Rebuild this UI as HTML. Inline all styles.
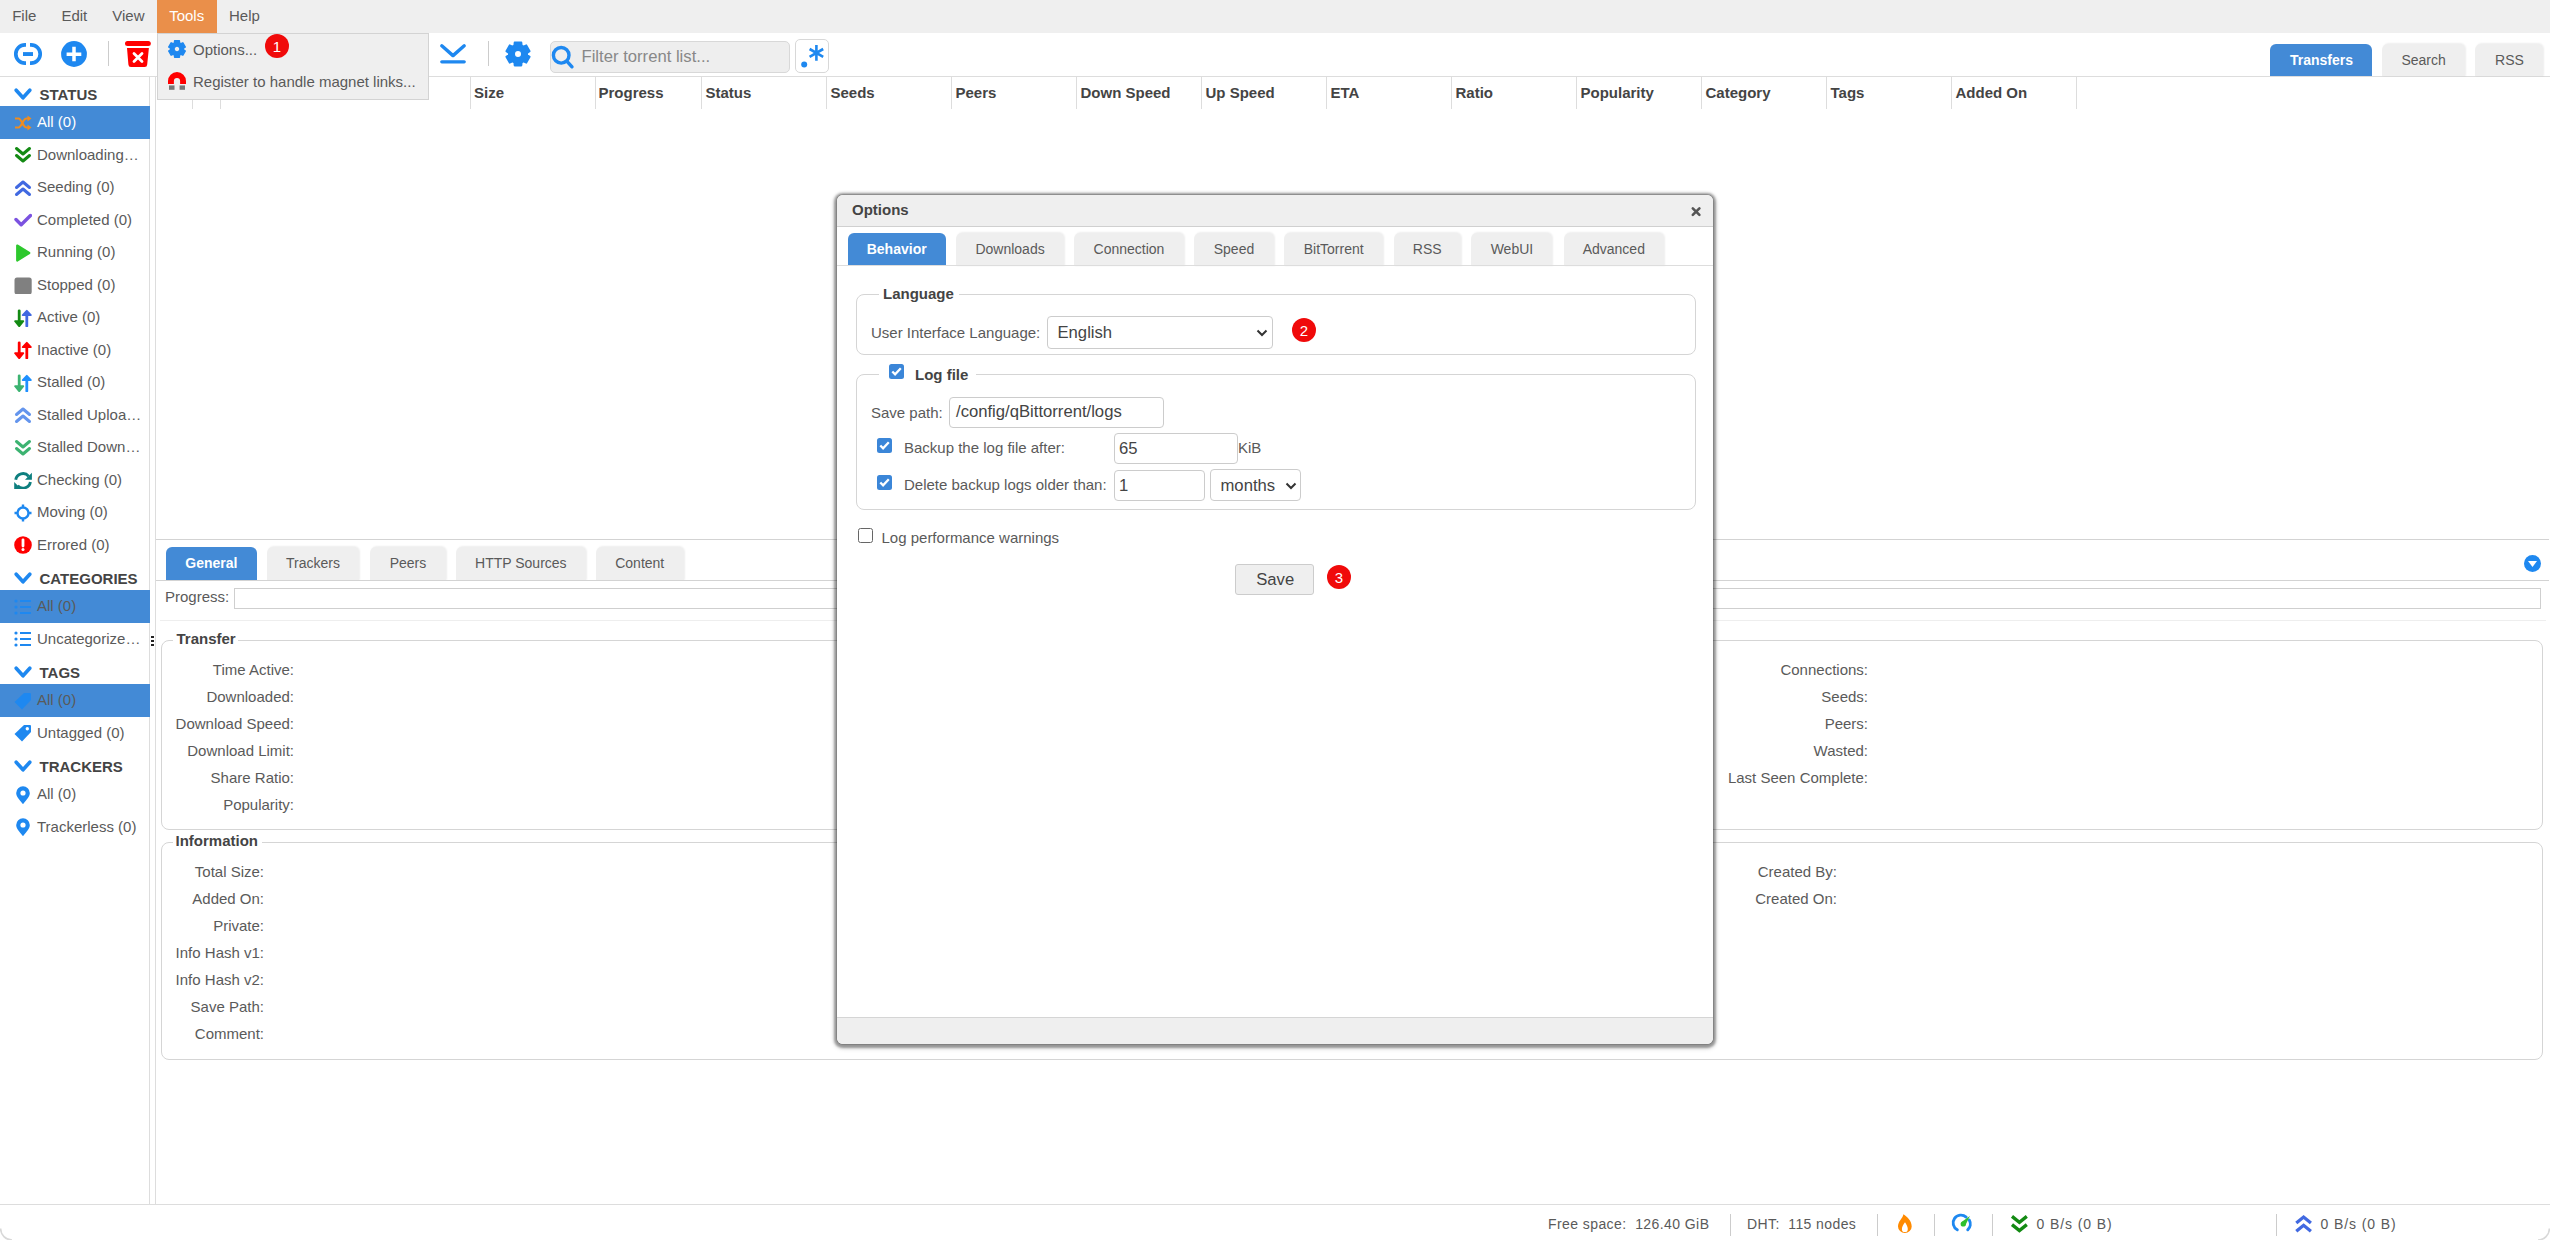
<!DOCTYPE html>
<html><head><meta charset="utf-8"><title>qBittorrent WebUI</title>
<style>
html,body{margin:0;padding:0;width:2550px;height:1240px;overflow:hidden;background:#fff;font-family:"Liberation Sans", sans-serif;}
.t{position:absolute;white-space:pre;line-height:1;}
.r{position:absolute;box-sizing:border-box;}
</style></head><body>
<div class="r" style="left:0.00px;top:0.00px;width:2550.00px;height:32.50px;background:#efefef"></div>
<div class="r" style="left:157.00px;top:0.00px;width:60.00px;height:32.50px;background:#ea8f4a"></div>
<div class="t" style="left:12.20px;top:8.30px;font-size:15px;color:#5a5a5a;">File</div>
<div class="t" style="left:61.40px;top:8.30px;font-size:15px;color:#5a5a5a;">Edit</div>
<div class="t" style="left:112.30px;top:8.30px;font-size:15px;color:#5a5a5a;">View</div>
<div class="t" style="left:169.20px;top:8.30px;font-size:15px;color:#fff;">Tools</div>
<div class="t" style="left:229.00px;top:8.30px;font-size:15px;color:#5a5a5a;">Help</div>
<div class="r" style="left:0.00px;top:76.00px;width:2550.00px;height:1.00px;background:#ddd"></div>
<svg class="r" style="left:10px;top:38px" width="36" height="30" viewBox="10 38 36 30"><path d="M26 44.8H25A9.2 9.2 0 0 0 25 63.2H26M30 44.8H31A9.2 9.2 0 0 1 31 63.2H30" fill="none" stroke="#1e88f0" stroke-width="3.7"/><rect x="23" y="52.1" width="10" height="3.9" fill="#1e88f0"/></svg>
<svg class="r" style="left:58px;top:38px" width="32" height="32" viewBox="58 38 32 32"><circle cx="74" cy="54" r="12.9" fill="#1e88f0"/><path d="M74 46.7V61.2M66.6 54.2H81.3" stroke="#fff" stroke-width="3.5"/></svg>
<div class="r" style="left:107.50px;top:41.00px;width:1.00px;height:24.50px;background:#ccc"></div>
<svg class="r" style="left:120px;top:38px" width="34" height="32" viewBox="120 38 34 32"><path d="M127.5 40.9H148.3A2.5 2.5 0 0 1 148.3 45.9H127.5A2.5 2.5 0 0 1 127.5 40.9Z" fill="#f00"/><path d="M127 47.9H148.9L147.2 64.4A2.6 2.6 0 0 1 144.6 66.9H131A2.6 2.6 0 0 1 128.4 64.4Z" fill="#f00"/><path d="M134 53.5L142 61.5M142 53.5L134 61.5" stroke="#fff" stroke-width="2.8" stroke-linecap="round"/></svg>
<svg class="r" style="left:436px;top:40px" width="34" height="28" viewBox="436 40 34 28"><path d="M441.8 45.8L453 55.6L464.2 45.8" fill="none" stroke="#1e88f0" stroke-width="3.4" stroke-linecap="round" stroke-linejoin="round"/><path d="M441.8 61.8H464.2" stroke="#1e88f0" stroke-width="3.3" stroke-linecap="round"/></svg>
<div class="r" style="left:487.50px;top:41.00px;width:1.00px;height:24.50px;background:#ccc"></div>
<svg class="r" style="left:500px;top:36px" width="36" height="36" viewBox="500 36 36 36"><path d="M527.15 54.97 L529.67 56.80 L526.26 62.70 L523.42 61.44 L521.73 62.41 L521.41 65.51 L514.59 65.51 L514.27 62.41 L512.58 61.44 L509.74 62.70 L506.33 56.80 L508.85 54.97 L508.85 53.03 L506.33 51.20 L509.74 45.30 L512.58 46.56 L514.27 45.59 L514.59 42.49 L521.41 42.49 L521.73 45.59 L523.42 46.56 L526.26 45.30 L529.67 51.20 L527.15 53.03Z M521.90 54.00A3.9 3.9 0 1 0 514.10 54.00A3.9 3.9 0 1 0 521.90 54.00Z" fill="#1e88f0" fill-rule="evenodd" stroke="#1e88f0" stroke-width="1.8" stroke-linejoin="round"/></svg>
<div class="r" style="left:549.50px;top:41.00px;width:240.00px;height:31.50px;background:#eee;border:1px solid #d8d8d8;border-radius:5px"></div>
<svg class="r" style="left:548px;top:42px" width="30" height="30" viewBox="548 42 30 30"><circle cx="561.2" cy="55.3" r="7.8" fill="none" stroke="#1e88f0" stroke-width="3.4"/><path d="M567 61.3L572 66.8" stroke="#1e88f0" stroke-width="3.4" stroke-linecap="round"/></svg>
<div class="t" style="left:581.50px;top:49.09px;font-size:16.67px;color:#888;">Filter torrent list...</div>
<div class="r" style="left:795.30px;top:39.30px;width:33.50px;height:33.50px;background:#fff;border:1px solid #d8d8d8;border-radius:5px"></div>
<svg class="r" style="left:796px;top:40px" width="32" height="32" viewBox="796 40 32 32"><circle cx="804.2" cy="64.5" r="3" fill="#1e88f0"/><path d="M816.4 45.1V60.7M809.6 49L823.2 56.8M823.2 49L809.6 56.8" stroke="#1e88f0" stroke-width="2.6"/></svg>
<div class="r" style="left:2270.00px;top:44.00px;width:102.00px;height:32.00px;background:#438ad6;border-radius:6px 6px 0 0"></div>
<div class="t" style="left:1721.50px;width:1200px;text-align:center;top:52.55px;font-size:14px;font-weight:bold;color:#fff;">Transfers</div>
<div class="r" style="left:2382.30px;top:44.00px;width:82.50px;height:32.00px;background:#efefef;border-radius:6px 6px 0 0;box-shadow:1px -0.5px 2px rgba(0,0,0,0.07)"></div>
<div class="t" style="left:1823.60px;width:1200px;text-align:center;top:52.55px;font-size:14px;color:#5a5a5a;">Search</div>
<div class="r" style="left:2475.00px;top:44.00px;width:68.20px;height:32.00px;background:#efefef;border-radius:6px 6px 0 0;box-shadow:1px -0.5px 2px rgba(0,0,0,0.07)"></div>
<div class="t" style="left:1909.50px;width:1200px;text-align:center;top:52.55px;font-size:14px;color:#5a5a5a;">RSS</div>
<div class="r" style="left:149.00px;top:77.00px;width:1.00px;height:1127.00px;background:#ddd"></div>
<div class="r" style="left:155.00px;top:77.00px;width:1.00px;height:1127.00px;background:#ddd"></div>
<svg class="r" style="left:14.00px;top:88.00px" width="18" height="13" viewBox="0 0 18 13"><path d="M2.2 2.2L9 9.8l6.8-7.6" fill="none" stroke="#1e88f0" stroke-width="3.6" stroke-linecap="round" stroke-linejoin="round"/></svg>
<div class="t" style="left:39.50px;top:87.30px;font-size:15px;font-weight:bold;color:#444;">STATUS</div>
<div class="r" style="left:0.00px;top:106.00px;width:149.50px;height:32.50px;background:#438ad6"></div>
<svg class="r" style="left:14px;top:113.50px" width="18" height="18" viewBox="0 0 18 18"><path d="M1 4.5h3.5c3 0 4.5 9 8 9H16M1 13.5h3.5c3 0 4.5-9 8-9H16" fill="none" stroke="#f08c1e" stroke-width="2.2"/><path d="M13.5 1.5l4 3-4 3zM13.5 10.5l4 3-4 3z" fill="#f08c1e"/></svg>
<div class="t" style="left:37.00px;top:114.10px;font-size:15px;color:#fff;">All (0)</div>
<svg class="r" style="left:14px;top:146.00px" width="18" height="18" viewBox="0 0 18 18"><path d="M2.5 2.5L9 8l6.5-5.5M2.5 9.5L9 15l6.5-5.5" fill="none" stroke="#138a13" stroke-width="3" stroke-linecap="round" stroke-linejoin="round"/></svg>
<div class="t" style="left:37.00px;top:146.60px;font-size:15px;color:#5a5a5a;">Downloading…</div>
<svg class="r" style="left:14px;top:178.50px" width="18" height="18" viewBox="0 0 18 18"><path d="M2.5 8.5L9 3l6.5 5.5M2.5 15.5L9 10l6.5 5.5" fill="none" stroke="#4169e1" stroke-width="3" stroke-linecap="round" stroke-linejoin="round"/></svg>
<div class="t" style="left:37.00px;top:179.10px;font-size:15px;color:#5a5a5a;">Seeding (0)</div>
<svg class="r" style="left:14px;top:211.00px" width="18" height="18" viewBox="0 0 18 18"><path d="M2 8.5l5.2 5.2L16.5 4.5" fill="none" stroke="#7b52e0" stroke-width="3.4" stroke-linecap="round" stroke-linejoin="round"/></svg>
<div class="t" style="left:37.00px;top:211.60px;font-size:15px;color:#5a5a5a;">Completed (0)</div>
<svg class="r" style="left:14px;top:243.50px" width="18" height="18" viewBox="0 0 18 18"><path d="M3.2 1.5L15.3 9L3.2 16.5Z" fill="#2dc82d" stroke="#2dc82d" stroke-width="2.2" stroke-linejoin="round"/></svg>
<div class="t" style="left:37.00px;top:244.10px;font-size:15px;color:#5a5a5a;">Running (0)</div>
<svg class="r" style="left:14px;top:276.00px" width="18" height="18" viewBox="0 0 18 18"><rect x="0.5" y="1.4" width="17.2" height="17" rx="2.5" fill="#808080"/></svg>
<div class="t" style="left:37.00px;top:276.60px;font-size:15px;color:#5a5a5a;">Stopped (0)</div>
<svg class="r" style="left:14px;top:308.50px" width="18" height="18" viewBox="0 0 18 18"><path d="M5.2 1.8V12.5" stroke="#138a13" stroke-width="2.8" stroke-linecap="round"/><path d="M1.2 12.2H9.2L5.2 17.1Z" fill="#138a13" stroke="#138a13" stroke-width="2" stroke-linejoin="round"/><path d="M12.8 16.9V6" stroke="#4169e1" stroke-width="2.8" stroke-linecap="round"/><path d="M8.8 6.1H16.8L12.8 1.9Z" fill="#4169e1" stroke="#4169e1" stroke-width="2" stroke-linejoin="round"/></svg>
<div class="t" style="left:37.00px;top:309.10px;font-size:15px;color:#5a5a5a;">Active (0)</div>
<svg class="r" style="left:14px;top:341.00px" width="18" height="18" viewBox="0 0 18 18"><path d="M5.2 1.8V12.5" stroke="#f00" stroke-width="2.8" stroke-linecap="round"/><path d="M1.2 12.2H9.2L5.2 17.1Z" fill="#f00" stroke="#f00" stroke-width="2" stroke-linejoin="round"/><path d="M12.8 16.9V6" stroke="#f00" stroke-width="2.8" stroke-linecap="round"/><path d="M8.8 6.1H16.8L12.8 1.9Z" fill="#f00" stroke="#f00" stroke-width="2" stroke-linejoin="round"/></svg>
<div class="t" style="left:37.00px;top:341.60px;font-size:15px;color:#5a5a5a;">Inactive (0)</div>
<svg class="r" style="left:14px;top:373.50px" width="18" height="18" viewBox="0 0 18 18"><path d="M5.2 1.8V12.5" stroke="#3cb371" stroke-width="2.8" stroke-linecap="round"/><path d="M1.2 12.2H9.2L5.2 17.1Z" fill="#3cb371" stroke="#3cb371" stroke-width="2" stroke-linejoin="round"/><path d="M12.8 16.9V6" stroke="#1e90ff" stroke-width="2.8" stroke-linecap="round"/><path d="M8.8 6.1H16.8L12.8 1.9Z" fill="#1e90ff" stroke="#1e90ff" stroke-width="2" stroke-linejoin="round"/></svg>
<div class="t" style="left:37.00px;top:374.10px;font-size:15px;color:#5a5a5a;">Stalled (0)</div>
<svg class="r" style="left:14px;top:406.00px" width="18" height="18" viewBox="0 0 18 18"><path d="M2.5 8.5L9 3l6.5 5.5M2.5 15.5L9 10l6.5 5.5" fill="none" stroke="#6495ed" stroke-width="3" stroke-linecap="round" stroke-linejoin="round"/></svg>
<div class="t" style="left:37.00px;top:406.60px;font-size:15px;color:#5a5a5a;">Stalled Uploa…</div>
<svg class="r" style="left:14px;top:438.50px" width="18" height="18" viewBox="0 0 18 18"><path d="M2.5 2.5L9 8l6.5-5.5M2.5 9.5L9 15l6.5-5.5" fill="none" stroke="#3cb371" stroke-width="3" stroke-linecap="round" stroke-linejoin="round"/></svg>
<div class="t" style="left:37.00px;top:439.10px;font-size:15px;color:#5a5a5a;">Stalled Down…</div>
<svg class="r" style="left:14px;top:471.00px" width="18" height="18" viewBox="0 0 18 18"><path d="M1.7 8.8A7.4 7.4 0 0 1 14.6 5.2M16.4 11A7.4 7.4 0 0 1 3.6 14.6" fill="none" stroke="#0e7f7f" stroke-width="2.9"/><path d="M17.9 1.8V8.7H11Z M0.2 11.1V18H7.1Z" fill="#0e7f7f"/></svg>
<div class="t" style="left:37.00px;top:471.60px;font-size:15px;color:#5a5a5a;">Checking (0)</div>
<svg class="r" style="left:14px;top:503.50px" width="18" height="18" viewBox="0 0 18 18"><circle cx="9" cy="9" r="5.5" fill="none" stroke="#1e88f0" stroke-width="2.4"/><path d="M9 0.5v3M9 14.5v3M0.5 9h3M14.5 9h3" stroke="#1e88f0" stroke-width="2.4"/></svg>
<div class="t" style="left:37.00px;top:504.10px;font-size:15px;color:#5a5a5a;">Moving (0)</div>
<svg class="r" style="left:14px;top:536.00px" width="18" height="18" viewBox="0 0 18 18"><circle cx="9" cy="9" r="8.8" fill="#f00"/><path d="M9 3.8v6.2" stroke="#fff" stroke-width="2.8" stroke-linecap="round"/><circle cx="9" cy="13.6" r="1.5" fill="#fff"/></svg>
<div class="t" style="left:37.00px;top:536.60px;font-size:15px;color:#5a5a5a;">Errored (0)</div>
<svg class="r" style="left:14.00px;top:572.00px" width="18" height="13" viewBox="0 0 18 13"><path d="M2.2 2.2L9 9.8l6.8-7.6" fill="none" stroke="#1e88f0" stroke-width="3.6" stroke-linecap="round" stroke-linejoin="round"/></svg>
<div class="t" style="left:39.50px;top:571.30px;font-size:15px;font-weight:bold;color:#444;">CATEGORIES</div>
<div class="r" style="left:0.00px;top:590.00px;width:149.50px;height:32.50px;background:#438ad6"></div>
<svg class="r" style="left:14px;top:597.50px" width="18" height="18" viewBox="0 0 18 18"><circle cx="2" cy="3" r="1.6" fill="#1e88f0"/><circle cx="2" cy="9" r="1.6" fill="#1e88f0"/><circle cx="2" cy="15" r="1.6" fill="#1e88f0"/><path d="M6 3h11M6 9h11M6 15h11" stroke="#1e88f0" stroke-width="2"/></svg>
<div class="t" style="left:37.00px;top:598.10px;font-size:15px;color:#5a5a5a;">All (0)</div>
<svg class="r" style="left:14px;top:630.00px" width="18" height="18" viewBox="0 0 18 18"><circle cx="2" cy="3" r="1.6" fill="#1e88f0"/><circle cx="2" cy="9" r="1.6" fill="#1e88f0"/><circle cx="2" cy="15" r="1.6" fill="#1e88f0"/><path d="M6 3h11M6 9h11M6 15h11" stroke="#1e88f0" stroke-width="2"/></svg>
<div class="t" style="left:37.00px;top:630.60px;font-size:15px;color:#5a5a5a;">Uncategorize…</div>
<svg class="r" style="left:14.00px;top:666.00px" width="18" height="13" viewBox="0 0 18 13"><path d="M2.2 2.2L9 9.8l6.8-7.6" fill="none" stroke="#1e88f0" stroke-width="3.6" stroke-linecap="round" stroke-linejoin="round"/></svg>
<div class="t" style="left:39.50px;top:665.30px;font-size:15px;font-weight:bold;color:#444;">TAGS</div>
<div class="r" style="left:0.00px;top:684.00px;width:149.50px;height:32.50px;background:#438ad6"></div>
<svg class="r" style="left:14px;top:691.50px" width="18" height="18" viewBox="0 0 18 18"><path d="M10 1h6a1 1 0 0 1 1 1v6l-9 9.5L0.5 10z" fill="#1e88f0"/></svg>
<div class="t" style="left:37.00px;top:692.10px;font-size:15px;color:#5a5a5a;">All (0)</div>
<svg class="r" style="left:14px;top:724.00px" width="18" height="18" viewBox="0 0 18 18"><path d="M10 1h6a1 1 0 0 1 1 1v6l-9 9.5L0.5 10z" fill="#1e88f0"/><circle cx="13.3" cy="4.7" r="1.7" fill="#fff"/></svg>
<div class="t" style="left:37.00px;top:724.60px;font-size:15px;color:#5a5a5a;">Untagged (0)</div>
<svg class="r" style="left:14.00px;top:760.00px" width="18" height="13" viewBox="0 0 18 13"><path d="M2.2 2.2L9 9.8l6.8-7.6" fill="none" stroke="#1e88f0" stroke-width="3.6" stroke-linecap="round" stroke-linejoin="round"/></svg>
<div class="t" style="left:39.50px;top:759.30px;font-size:15px;font-weight:bold;color:#444;">TRACKERS</div>
<svg class="r" style="left:14px;top:785.50px" width="18" height="18" viewBox="0 0 18 18"><path d="M9 18.2C5 13.2 2.2 10.4 2.2 7A6.8 6.8 0 0 1 15.8 7C15.8 10.4 13 13.2 9 18.2Z" fill="#1e88f0"/><circle cx="9" cy="7" r="2.6" fill="#fff"/></svg>
<div class="t" style="left:37.00px;top:786.10px;font-size:15px;color:#5a5a5a;">All (0)</div>
<svg class="r" style="left:14px;top:818.00px" width="18" height="18" viewBox="0 0 18 18"><path d="M9 18.2C5 13.2 2.2 10.4 2.2 7A6.8 6.8 0 0 1 15.8 7C15.8 10.4 13 13.2 9 18.2Z" fill="#1e88f0"/><circle cx="9" cy="7" r="2.6" fill="#fff"/></svg>
<div class="t" style="left:37.00px;top:818.60px;font-size:15px;color:#5a5a5a;">Trackerless (0)</div>
<div class="r" style="left:151.00px;top:635.50px;width:3.00px;height:2.50px;background:#222"></div>
<div class="r" style="left:151.00px;top:639.50px;width:3.00px;height:2.50px;background:#222"></div>
<div class="r" style="left:151.00px;top:643.50px;width:3.00px;height:2.50px;background:#222"></div>
<div class="r" style="left:192.00px;top:77.00px;width:1.00px;height:32.00px;background:#ddd"></div>
<div class="r" style="left:220.00px;top:77.00px;width:1.00px;height:32.00px;background:#ddd"></div>
<div class="r" style="left:470.00px;top:77.00px;width:1.00px;height:32.00px;background:#ddd"></div>
<div class="r" style="left:595.00px;top:77.00px;width:1.00px;height:32.00px;background:#ddd"></div>
<div class="r" style="left:701.00px;top:77.00px;width:1.00px;height:32.00px;background:#ddd"></div>
<div class="r" style="left:826.00px;top:77.00px;width:1.00px;height:32.00px;background:#ddd"></div>
<div class="r" style="left:951.00px;top:77.00px;width:1.00px;height:32.00px;background:#ddd"></div>
<div class="r" style="left:1076.00px;top:77.00px;width:1.00px;height:32.00px;background:#ddd"></div>
<div class="r" style="left:1201.00px;top:77.00px;width:1.00px;height:32.00px;background:#ddd"></div>
<div class="r" style="left:1326.00px;top:77.00px;width:1.00px;height:32.00px;background:#ddd"></div>
<div class="r" style="left:1451.00px;top:77.00px;width:1.00px;height:32.00px;background:#ddd"></div>
<div class="r" style="left:1576.00px;top:77.00px;width:1.00px;height:32.00px;background:#ddd"></div>
<div class="r" style="left:1701.00px;top:77.00px;width:1.00px;height:32.00px;background:#ddd"></div>
<div class="r" style="left:1826.00px;top:77.00px;width:1.00px;height:32.00px;background:#ddd"></div>
<div class="r" style="left:1951.00px;top:77.00px;width:1.00px;height:32.00px;background:#ddd"></div>
<div class="r" style="left:2076.00px;top:77.00px;width:1.00px;height:32.00px;background:#ddd"></div>
<div class="t" style="left:474.00px;top:84.90px;font-size:15px;font-weight:bold;color:#444;">Size</div>
<div class="t" style="left:598.50px;top:84.90px;font-size:15px;font-weight:bold;color:#444;">Progress</div>
<div class="t" style="left:705.50px;top:84.90px;font-size:15px;font-weight:bold;color:#444;">Status</div>
<div class="t" style="left:830.50px;top:84.90px;font-size:15px;font-weight:bold;color:#444;">Seeds</div>
<div class="t" style="left:955.50px;top:84.90px;font-size:15px;font-weight:bold;color:#444;">Peers</div>
<div class="t" style="left:1080.50px;top:84.90px;font-size:15px;font-weight:bold;color:#444;">Down Speed</div>
<div class="t" style="left:1205.50px;top:84.90px;font-size:15px;font-weight:bold;color:#444;">Up Speed</div>
<div class="t" style="left:1330.50px;top:84.90px;font-size:15px;font-weight:bold;color:#444;">ETA</div>
<div class="t" style="left:1455.50px;top:84.90px;font-size:15px;font-weight:bold;color:#444;">Ratio</div>
<div class="t" style="left:1580.50px;top:84.90px;font-size:15px;font-weight:bold;color:#444;">Popularity</div>
<div class="t" style="left:1705.50px;top:84.90px;font-size:15px;font-weight:bold;color:#444;">Category</div>
<div class="t" style="left:1830.50px;top:84.90px;font-size:15px;font-weight:bold;color:#444;">Tags</div>
<div class="t" style="left:1955.50px;top:84.90px;font-size:15px;font-weight:bold;color:#444;">Added On</div>
<div class="r" style="left:155.50px;top:539.00px;width:2393.00px;height:1.00px;background:#d3d3d3"></div>
<div class="r" style="left:166.00px;top:547.00px;width:90.80px;height:33.00px;background:#438ad6;border-radius:6px 6px 0 0"></div>
<div class="t" style="left:-388.60px;width:1200px;text-align:center;top:555.55px;font-size:14px;font-weight:bold;color:#fff;">General</div>
<div class="r" style="left:267.00px;top:547.00px;width:92.00px;height:33.00px;background:#efefef;border-radius:6px 6px 0 0;box-shadow:1px -0.5px 2px rgba(0,0,0,0.07)"></div>
<div class="t" style="left:-287.00px;width:1200px;text-align:center;top:555.55px;font-size:14px;color:#5a5a5a;">Trackers</div>
<div class="r" style="left:370.00px;top:547.00px;width:76.00px;height:33.00px;background:#efefef;border-radius:6px 6px 0 0;box-shadow:1px -0.5px 2px rgba(0,0,0,0.07)"></div>
<div class="t" style="left:-192.00px;width:1200px;text-align:center;top:555.55px;font-size:14px;color:#5a5a5a;">Peers</div>
<div class="r" style="left:455.60px;top:547.00px;width:130.40px;height:33.00px;background:#efefef;border-radius:6px 6px 0 0;box-shadow:1px -0.5px 2px rgba(0,0,0,0.07)"></div>
<div class="t" style="left:-79.20px;width:1200px;text-align:center;top:555.55px;font-size:14px;color:#5a5a5a;">HTTP Sources</div>
<div class="r" style="left:596.00px;top:547.00px;width:87.50px;height:33.00px;background:#efefef;border-radius:6px 6px 0 0;box-shadow:1px -0.5px 2px rgba(0,0,0,0.07)"></div>
<div class="t" style="left:39.75px;width:1200px;text-align:center;top:555.55px;font-size:14px;color:#5a5a5a;">Content</div>
<div class="r" style="left:155.50px;top:580.00px;width:2393.00px;height:1.00px;background:#d3d3d3"></div>
<svg class="r" style="left:2523.50px;top:554.50px" width="17" height="17" viewBox="0 0 17 17"><circle cx="8.5" cy="8.5" r="8.5" fill="#1e88f0"/><path d="M4 6h9l-4.5 6z" fill="#fff"/></svg>
<div class="t" style="left:165.00px;top:588.50px;font-size:15px;color:#5a5a5a;">Progress:</div>
<div class="r" style="left:234.00px;top:587.50px;width:2307.00px;height:21.50px;border:1px solid #cfcfcf"></div>
<div class="r" style="left:160.00px;top:620.00px;width:2386.00px;height:1.00px;background:#eee"></div>
<div class="r" style="left:161.00px;top:639.50px;width:2382.00px;height:190.50px;border:1px solid #d5d5d5;border-radius:8px"></div>
<div class="r" style="left:172.50px;top:630.00px;width:65.00px;height:18.00px;background:#fff"></div>
<div class="t" style="left:176.50px;top:631.00px;font-size:15px;font-weight:bold;color:#444;">Transfer</div>
<div class="t" style="left:-906.00px;width:1200px;text-align:right;top:661.90px;font-size:15px;color:#5a5a5a;">Time Active:</div>
<div class="t" style="left:-906.00px;width:1200px;text-align:right;top:688.90px;font-size:15px;color:#5a5a5a;">Downloaded:</div>
<div class="t" style="left:-906.00px;width:1200px;text-align:right;top:715.90px;font-size:15px;color:#5a5a5a;">Download Speed:</div>
<div class="t" style="left:-906.00px;width:1200px;text-align:right;top:742.90px;font-size:15px;color:#5a5a5a;">Download Limit:</div>
<div class="t" style="left:-906.00px;width:1200px;text-align:right;top:769.90px;font-size:15px;color:#5a5a5a;">Share Ratio:</div>
<div class="t" style="left:-906.00px;width:1200px;text-align:right;top:796.90px;font-size:15px;color:#5a5a5a;">Popularity:</div>
<div class="t" style="left:668.00px;width:1200px;text-align:right;top:661.90px;font-size:15px;color:#5a5a5a;">Connections:</div>
<div class="t" style="left:668.00px;width:1200px;text-align:right;top:688.90px;font-size:15px;color:#5a5a5a;">Seeds:</div>
<div class="t" style="left:668.00px;width:1200px;text-align:right;top:715.90px;font-size:15px;color:#5a5a5a;">Peers:</div>
<div class="t" style="left:668.00px;width:1200px;text-align:right;top:742.90px;font-size:15px;color:#5a5a5a;">Wasted:</div>
<div class="t" style="left:668.00px;width:1200px;text-align:right;top:769.90px;font-size:15px;color:#5a5a5a;">Last Seen Complete:</div>
<div class="r" style="left:161.00px;top:841.50px;width:2382.00px;height:218.50px;border:1px solid #d5d5d5;border-radius:8px"></div>
<div class="r" style="left:172.50px;top:832.00px;width:89.00px;height:18.00px;background:#fff"></div>
<div class="t" style="left:175.50px;top:833.10px;font-size:15px;font-weight:bold;color:#444;">Information</div>
<div class="t" style="left:-936.00px;width:1200px;text-align:right;top:863.60px;font-size:15px;color:#5a5a5a;">Total Size:</div>
<div class="t" style="left:-936.00px;width:1200px;text-align:right;top:890.60px;font-size:15px;color:#5a5a5a;">Added On:</div>
<div class="t" style="left:-936.00px;width:1200px;text-align:right;top:917.60px;font-size:15px;color:#5a5a5a;">Private:</div>
<div class="t" style="left:-936.00px;width:1200px;text-align:right;top:944.60px;font-size:15px;color:#5a5a5a;">Info Hash v1:</div>
<div class="t" style="left:-936.00px;width:1200px;text-align:right;top:971.60px;font-size:15px;color:#5a5a5a;">Info Hash v2:</div>
<div class="t" style="left:-936.00px;width:1200px;text-align:right;top:998.60px;font-size:15px;color:#5a5a5a;">Save Path:</div>
<div class="t" style="left:-936.00px;width:1200px;text-align:right;top:1025.60px;font-size:15px;color:#5a5a5a;">Comment:</div>
<div class="t" style="left:637.00px;width:1200px;text-align:right;top:863.60px;font-size:15px;color:#5a5a5a;">Created By:</div>
<div class="t" style="left:637.00px;width:1200px;text-align:right;top:890.60px;font-size:15px;color:#5a5a5a;">Created On:</div>
<div class="r" style="left:0.00px;top:1204.00px;width:2550.00px;height:1.00px;background:#ddd"></div>
<div class="t" style="left:1548.00px;top:1217.15px;font-size:14px;color:#5a5a5a;letter-spacing:0.42px">Free space:  126.40 GiB</div>
<div class="r" style="left:1729.50px;top:1213.50px;width:1.00px;height:22.00px;background:#ccc"></div>
<div class="t" style="left:1747.00px;top:1217.15px;font-size:14px;color:#5a5a5a;letter-spacing:0.4px">DHT:  115 nodes</div>
<div class="r" style="left:1876.50px;top:1213.50px;width:1.00px;height:22.00px;background:#ccc"></div>
<svg class="r" style="left:1894px;top:1211px" width="22" height="26" viewBox="1894 1211 22 26"><path d="M1903.4 1214.2C1902.8 1218.3 1898 1221 1898 1226.6A6.85 6.4 0 0 0 1911.7 1226.6C1911.7 1220.8 1907.3 1216.6 1903.4 1214.2Z M1905 1222.3C1903.6 1224.4 1901.9 1226.6 1901.9 1228.9A2.95 3.2 0 0 0 1907.8 1228.9C1907.8 1226.6 1906.3 1224.4 1905 1222.3Z" fill="#ff8a00" fill-rule="evenodd"/></svg>
<div class="r" style="left:1934.00px;top:1213.50px;width:1.00px;height:22.00px;background:#ccc"></div>
<svg class="r" style="left:1950px;top:1211px" width="26" height="26" viewBox="1950 1211 26 26"><path d="M1957.28 1229.8A7.8 7.8 0 1 1 1966.16 1217.11M1969.25 1220.1A7.8 7.8 0 0 1 1967.72 1229.8" fill="none" stroke="#1e88f0" stroke-width="2.9" stroke-linecap="round"/><circle cx="1963.2" cy="1224" r="2.6" fill="#2ec02e"/><path d="M1969.9 1216.1L1965.19 1225.68L1961.21 1222.32Z" fill="#2ec02e"/></svg>
<div class="r" style="left:1991.50px;top:1213.50px;width:1.00px;height:22.00px;background:#ccc"></div>
<svg class="r" style="left:2008px;top:1212px" width="22" height="24" viewBox="2008 1212 22 24"><path d="M2012 1216.4L2019.4 1222.4L2026.8 1216.4M2012 1224.6L2019.4 1230.6L2026.8 1224.6" fill="none" stroke="#138a13" stroke-width="3.3" stroke-linecap="butt" stroke-linejoin="miter"/></svg>
<div class="t" style="left:2036.50px;top:1217.15px;font-size:14px;color:#5a5a5a;letter-spacing:0.9px">0 B/s (0 B)</div>
<div class="r" style="left:2275.50px;top:1213.50px;width:1.00px;height:22.00px;background:#ccc"></div>
<svg class="r" style="left:2291px;top:1212px" width="22" height="24" viewBox="2291 1212 22 24"><path d="M2296.3 1223.1L2303.6 1217.1L2310.9 1223.1M2296.3 1231.3L2303.6 1225.3L2310.9 1231.3" fill="none" stroke="#4169e1" stroke-width="3.3" stroke-linecap="butt" stroke-linejoin="miter"/></svg>
<div class="t" style="left:2320.50px;top:1217.15px;font-size:14px;color:#5a5a5a;letter-spacing:0.9px">0 B/s (0 B)</div>
<div class="r" style="left:157.00px;top:32.50px;width:272.00px;height:67.00px;background:#efefef;border:1px solid #d3d3d3"></div>
<svg class="r" style="left:165px;top:37px" width="24" height="24" viewBox="165 37 24 24"><path d="M183.56 49.70 L185.36 51.01 L182.92 55.24 L180.89 54.33 L179.68 55.03 L179.44 57.25 L174.56 57.25 L174.32 55.03 L173.11 54.33 L171.08 55.24 L168.64 51.01 L170.44 49.70 L170.44 48.30 L168.64 46.99 L171.08 42.76 L173.11 43.67 L174.32 42.97 L174.56 40.75 L179.44 40.75 L179.68 42.97 L180.89 43.67 L182.92 42.76 L185.36 46.99 L183.56 48.30Z M179.90 49.00A2.9 2.9 0 1 0 174.10 49.00A2.9 2.9 0 1 0 179.90 49.00Z" fill="#1e88f0" fill-rule="evenodd" stroke="#1e88f0" stroke-width="1.3" stroke-linejoin="round"/></svg>
<div class="t" style="left:193.00px;top:41.80px;font-size:15px;color:#5a5a5a;">Options...</div>
<svg class="r" style="left:165px;top:69px" width="24" height="24" viewBox="165 69 24 24"><path d="M168 84V81A9 9 0 0 1 186 81V84H180.1V81A3.05 3.05 0 0 0 173.9 81V84Z" fill="#f00"/><rect x="169" y="85.4" width="5.5" height="4.4" fill="#777"/><rect x="179.6" y="85.4" width="5.4" height="4.4" fill="#777"/></svg>
<div class="t" style="left:193.00px;top:73.60px;font-size:15px;color:#5a5a5a;">Register to handle magnet links...</div>
<div class="r" style="left:265.00px;top:34.00px;width:24.00px;height:24.00px;background:#f00a0a;border-radius:50%"></div>
<div class="t" style="left:-323.00px;width:1200px;text-align:center;top:38.80px;font-size:15px;color:#fff;">1</div>
<div class="r" style="left:837.00px;top:195.00px;width:876.00px;height:848.50px;background:#fff;border-radius:6px;box-shadow:0 0 0 1px rgba(0,0,0,0.12),0 1px 2.5px 2.5px rgba(0,0,0,0.36),0 2px 5px 3px rgba(0,0,0,0.1)"></div>
<div class="r" style="left:837.00px;top:195.00px;width:876.00px;height:31.50px;background:#efefef;border-radius:6px 6px 0 0;border-bottom:1px solid #d0d0d0"></div>
<div class="t" style="left:852.00px;top:202.10px;font-size:15px;font-weight:bold;color:#444;">Options</div>
<svg class="r" style="left:1688px;top:204px" width="16" height="16" viewBox="1688 204 16 16"><path d="M1692.8 208.3L1699.4 214.9M1699.4 208.3L1692.8 214.9" stroke="#555" stroke-width="2.6" stroke-linecap="round"/></svg>
<div class="r" style="left:847.60px;top:232.50px;width:98.20px;height:33.00px;background:#438ad6;border-radius:6px 6px 0 0"></div>
<div class="t" style="left:296.70px;width:1200px;text-align:center;top:241.55px;font-size:14px;font-weight:bold;color:#fff;">Behavior</div>
<div class="r" style="left:956.40px;top:232.50px;width:107.30px;height:33.00px;background:#efefef;border-radius:6px 6px 0 0;box-shadow:1px -0.5px 2px rgba(0,0,0,0.07)"></div>
<div class="t" style="left:410.05px;width:1200px;text-align:center;top:241.55px;font-size:14px;color:#5a5a5a;">Downloads</div>
<div class="r" style="left:1074.30px;top:232.50px;width:109.40px;height:33.00px;background:#efefef;border-radius:6px 6px 0 0;box-shadow:1px -0.5px 2px rgba(0,0,0,0.07)"></div>
<div class="t" style="left:529.00px;width:1200px;text-align:center;top:241.55px;font-size:14px;color:#5a5a5a;">Connection</div>
<div class="r" style="left:1194.30px;top:232.50px;width:79.40px;height:33.00px;background:#efefef;border-radius:6px 6px 0 0;box-shadow:1px -0.5px 2px rgba(0,0,0,0.07)"></div>
<div class="t" style="left:634.00px;width:1200px;text-align:center;top:241.55px;font-size:14px;color:#5a5a5a;">Speed</div>
<div class="r" style="left:1284.30px;top:232.50px;width:98.80px;height:33.00px;background:#efefef;border-radius:6px 6px 0 0;box-shadow:1px -0.5px 2px rgba(0,0,0,0.07)"></div>
<div class="t" style="left:733.70px;width:1200px;text-align:center;top:241.55px;font-size:14px;color:#5a5a5a;">BitTorrent</div>
<div class="r" style="left:1393.70px;top:232.50px;width:67.10px;height:33.00px;background:#efefef;border-radius:6px 6px 0 0;box-shadow:1px -0.5px 2px rgba(0,0,0,0.07)"></div>
<div class="t" style="left:827.25px;width:1200px;text-align:center;top:241.55px;font-size:14px;color:#5a5a5a;">RSS</div>
<div class="r" style="left:1471.40px;top:232.50px;width:81.10px;height:33.00px;background:#efefef;border-radius:6px 6px 0 0;box-shadow:1px -0.5px 2px rgba(0,0,0,0.07)"></div>
<div class="t" style="left:911.95px;width:1200px;text-align:center;top:241.55px;font-size:14px;color:#5a5a5a;">WebUI</div>
<div class="r" style="left:1563.80px;top:232.50px;width:100.00px;height:33.00px;background:#efefef;border-radius:6px 6px 0 0;box-shadow:1px -0.5px 2px rgba(0,0,0,0.07)"></div>
<div class="t" style="left:1013.80px;width:1200px;text-align:center;top:241.55px;font-size:14px;color:#5a5a5a;">Advanced</div>
<div class="r" style="left:837.00px;top:265.00px;width:876.00px;height:1.00px;background:#ddd"></div>
<div class="r" style="left:855.50px;top:294.00px;width:840.00px;height:61.00px;border:1px solid #d5d5d5;border-radius:8px"></div>
<div class="r" style="left:878.50px;top:285.00px;width:80.50px;height:16.00px;background:#fff"></div>
<div class="t" style="left:883.00px;top:286.00px;font-size:15px;font-weight:bold;color:#444;">Language</div>
<div class="t" style="left:871.00px;top:325.20px;font-size:15px;color:#5a5a5a;">User Interface Language:</div>
<div class="r" style="left:1047.00px;top:316.00px;width:226.00px;height:33.00px;background:#fff;border:1px solid #ccc;border-radius:4px"></div>
<div class="t" style="left:1057.50px;top:325.49px;font-size:16.67px;color:#444;">English</div>
<svg class="r" style="left:1255.70px;top:328.60px" width="12" height="8" viewBox="0 0 12 8"><path d="M1.5 1.5L6 6l4.5-4.5" fill="none" stroke="#333" stroke-width="2"/></svg>
<div class="r" style="left:1292.00px;top:318.00px;width:24.00px;height:24.00px;background:#f00a0a;border-radius:50%"></div>
<div class="t" style="left:704.00px;width:1200px;text-align:center;top:322.80px;font-size:15px;color:#fff;">2</div>
<div class="r" style="left:855.50px;top:373.50px;width:840.00px;height:136.00px;border:1px solid #d5d5d5;border-radius:8px"></div>
<div class="r" style="left:879.00px;top:364.00px;width:97.00px;height:18.00px;background:#fff"></div>
<div class="r" style="left:889.00px;top:364.00px;width:15.00px;height:15.00px;background:#3b86d8;border-radius:2.5px"></div>
<svg class="r" style="left:889.00px;top:364.00px" width="15" height="15" viewBox="0 0 15 15"><path d="M3.3 7.5L6.1 10.4L11.8 4.3" fill="none" stroke="#fff" stroke-width="2.3"/></svg>
<div class="t" style="left:915.00px;top:366.80px;font-size:15px;font-weight:bold;color:#444;">Log file</div>
<div class="t" style="left:871.00px;top:405.30px;font-size:15px;color:#5a5a5a;">Save path:</div>
<div class="r" style="left:949.00px;top:396.50px;width:215.00px;height:31.00px;background:#fff;border:1px solid #ccc;border-radius:4px"></div>
<div class="t" style="left:956.00px;top:404.49px;font-size:16.67px;color:#444;">/config/qBittorrent/logs</div>
<div class="r" style="left:877.00px;top:438.00px;width:15.00px;height:15.00px;background:#3b86d8;border-radius:2.5px"></div>
<svg class="r" style="left:877.00px;top:438.00px" width="15" height="15" viewBox="0 0 15 15"><path d="M3.3 7.5L6.1 10.4L11.8 4.3" fill="none" stroke="#fff" stroke-width="2.3"/></svg>
<div class="t" style="left:904.00px;top:440.40px;font-size:15px;color:#5a5a5a;">Backup the log file after:</div>
<div class="r" style="left:1113.50px;top:432.50px;width:124.00px;height:31.00px;background:#fff;border:1px solid #ccc;border-radius:4px"></div>
<div class="t" style="left:1119.00px;top:440.89px;font-size:16.67px;color:#444;">65</div>
<div class="t" style="left:1238.00px;top:440.30px;font-size:15px;color:#5a5a5a;">KiB</div>
<div class="r" style="left:877.00px;top:475.00px;width:15.00px;height:15.00px;background:#3b86d8;border-radius:2.5px"></div>
<svg class="r" style="left:877.00px;top:475.00px" width="15" height="15" viewBox="0 0 15 15"><path d="M3.3 7.5L6.1 10.4L11.8 4.3" fill="none" stroke="#fff" stroke-width="2.3"/></svg>
<div class="t" style="left:904.00px;top:477.30px;font-size:15px;color:#5a5a5a;">Delete backup logs older than:</div>
<div class="r" style="left:1113.50px;top:469.50px;width:91.00px;height:31.00px;background:#fff;border:1px solid #ccc;border-radius:4px"></div>
<div class="t" style="left:1119.00px;top:477.89px;font-size:16.67px;color:#444;">1</div>
<div class="r" style="left:1209.50px;top:468.50px;width:91.00px;height:32.00px;background:#fff;border:1px solid #ccc;border-radius:4px"></div>
<div class="t" style="left:1220.50px;top:477.59px;font-size:16.67px;color:#444;">months</div>
<svg class="r" style="left:1284.50px;top:482.00px" width="12" height="8" viewBox="0 0 12 8"><path d="M1.5 1.5L6 6l4.5-4.5" fill="none" stroke="#333" stroke-width="2"/></svg>
<div class="r" style="left:858.00px;top:527.50px;width:15.00px;height:15.00px;background:#fff;border:1.5px solid #666;border-radius:2.5px"></div>
<div class="t" style="left:881.50px;top:530.10px;font-size:15px;color:#5a5a5a;">Log performance warnings</div>
<div class="r" style="left:1235.30px;top:564.30px;width:79.20px;height:31.20px;background:#efefef;border:1px solid #ccc;border-radius:3px"></div>
<div class="t" style="left:675.20px;width:1200px;text-align:center;top:571.89px;font-size:16.67px;color:#444;">Save</div>
<div class="r" style="left:1327.00px;top:565.00px;width:24.00px;height:24.00px;background:#f00a0a;border-radius:50%"></div>
<div class="t" style="left:739.00px;width:1200px;text-align:center;top:569.80px;font-size:15px;color:#fff;">3</div>
<div class="r" style="left:837.00px;top:1016.50px;width:876.00px;height:27.00px;background:#efefef;border-top:1px solid #d5d5d5;border-radius:0 0 6px 6px"></div>
<svg class="r" style="left:0px;top:1222px" width="20" height="18" viewBox="0 1222 20 18"><path d="M0.6 1228.5A11.5 11.5 0 0 0 12 1240" fill="none" stroke="#c8c8c8" stroke-width="1.6" opacity="0.7"/></svg>
<svg class="r" style="left:2530px;top:1222px" width="20" height="18" viewBox="2530 1222 20 18"><path d="M2549.4 1228.5A11.5 11.5 0 0 1 2538 1240" fill="none" stroke="#c8c8c8" stroke-width="1.6" opacity="0.7"/></svg>
</body></html>
